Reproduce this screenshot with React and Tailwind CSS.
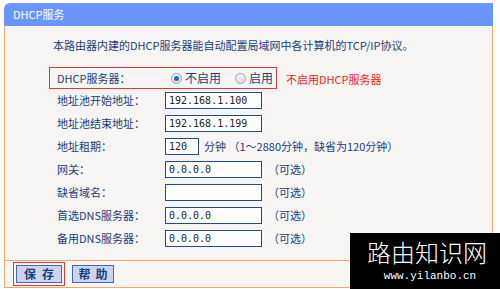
import React from 'react';

const cjk = { fontFamily: '"Noto Sans CJK SC", "Liberation Sans", sans-serif' };
const mono = { fontFamily: '"DejaVu Sans Mono", "Liberation Mono", monospace' };

function Field({ value = '', w = 'w-[97px]' }) {
  return (
    <div
      className={`${w} h-[17px] border border-[#244a86] bg-white flex items-center pl-[3px] text-[10px] text-[#222]`}
      style={mono}
    >
      {value}
    </div>
  );
}

function Radio({ on }) {
  return (
    <span className="w-[11px] h-[11px] rounded-full border border-[#9aa3ad] bg-gradient-to-b from-[#f4f4f4] to-[#dcdcdc] flex items-center justify-center">
      {on && <span className="w-[5px] h-[5px] rounded-full bg-[#2f66c8]" />}
    </span>
  );
}

export default function App() {
  const rows = [
    { label: '地址池开始地址：', value: '192.168.1.100' },
    { label: '地址池结束地址：', value: '192.168.1.199' },
    { label: '地址租期：', lease: true },
    { label: '网关：', value: '0.0.0.0', opt: true },
    { label: '缺省域名：', value: '', opt: true },
    { label: '首选DNS服务器：', value: '0.0.0.0', opt: true },
    { label: '备用DNS服务器：', value: '0.0.0.0', opt: true },
  ];

  return (
    <div className="w-[500px] h-[289px] bg-white relative overflow-hidden text-[11px] text-[#1b3d7b]" style={cjk}>
      <div className="ml-[4px] mt-[3px] w-[489px] flex flex-col">
        <div className="h-[23px] bg-[#6a96fc] rounded-tl-[6px] flex items-center pl-[9px] text-white text-[11px]">
          DHCP服务
        </div>

        <div className="border-l border-r border-[#f3a868] bg-[#f6f5f3] h-[234px] pl-[44px] pt-[12px]">
          <div className="ml-[4px] h-[14px] leading-[14px]">
            本路由器内建的DHCP服务器能自动配置局域网中各计算机的TCP/IP协议。
          </div>

          <div className="mt-[15px] w-[228px] h-[22px] border border-[#e0383c] flex items-center pl-[7px]">
            <span className="w-[114px]">DHCP服务器：</span>
            <Radio on />
            <span className="ml-[3px] text-[12px]">不启用</span>
            <span className="ml-[14px]"><Radio /></span>
            <span className="ml-[3px] text-[12px]">启用</span>
          </div>
          <div className="absolute left-[286px] top-[72px] text-[11px] text-[#ee1c24] leading-[14px]">
            不启用DHCP服务器
          </div>

          <div className="ml-[8px] flex flex-col">
            {rows.map((r, i) => (
              <div key={i} className="h-[23px] flex items-center">
                <span className="w-[108px] shrink-0">{r.label}</span>
                {r.lease ? (
                  <>
                    <Field value="120" w="w-[34px]" />
                    <span className="ml-[5px] text-[11px]">分钟 （1～2880分钟，缺省为120分钟）</span>
                  </>
                ) : (
                  <Field value={r.value} />
                )}
                {r.opt && <span className="ml-[6px]">（可选）</span>}
              </div>
            ))}
          </div>
        </div>

        <div className="h-[28px] border border-[#f3a868] bg-[#f6f5f3] flex items-center pl-[8px] gap-[7px]">
          <div className="border border-[#e0383c] p-[2px]">
            <button className="w-[46px] h-[18px] bg-[#cbd6ee] border border-[#4a68a8] text-[12px] font-bold text-[#1b3d7b] leading-none tracking-[6px] pl-[6px]">
              保存
            </button>
          </div>
          <button className="w-[42px] h-[18px] bg-[#cbd6ee] border border-[#4a68a8] text-[12px] font-bold text-[#1b3d7b] leading-none tracking-[5px] pl-[5px]">
            帮助
          </button>
        </div>
      </div>

      <div className="absolute left-[350px] top-[233px] w-[150px] h-[56px] bg-black flex flex-col items-center pt-[6px]">
        <div className="text-white text-[24px] leading-[26px] pl-[4px]" style={{ fontFamily: '"Noto Sans CJK SC", serif', fontWeight: 300 }}>
          路由知识网
        </div>
        <div className="text-white text-[11px] leading-[14px] mt-[4px] pl-[10px]" style={{ fontFamily: '"Liberation Mono", monospace' }}>
          www.yilanbo.cn
        </div>
      </div>
    </div>
  );
}
